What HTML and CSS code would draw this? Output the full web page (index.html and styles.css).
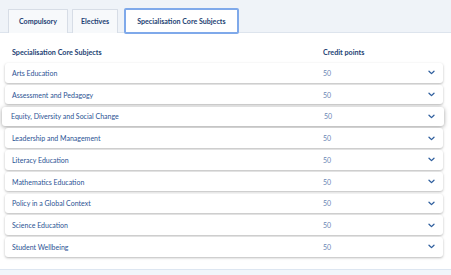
FILE: index.html
```html
<!DOCTYPE html>
<html lang="en">

<head>
    <meta charset="UTF-8">
    <meta name="viewport" content="width=device-width, initial-scale=1.0">
    <title>Course structure</title>
    <link rel="stylesheet" href="styles.css">
</head>

<body>
    <div class="tabs">
        <div class="tab">Compulsory</div>
        <div class="tab narrow">Electives</div>
        <div class="tab active">Specialisation Core Subjects</div>
    </div>

    <div class="content">
        <div class="head">
            <span>Specialisation Core Subjects</span>
            <span>Credit points</span>
        </div>

        <div class="row"><span class="name">Arts Education</span><span class="pts">50</span><span class="chev"></span></div>
        <div class="row"><span class="name">Assessment and Pedagogy</span><span class="pts">50</span><span class="chev"></span></div>
        <div class="row hover"><span class="name">Equity, Diversity and Social Change</span><span class="pts">50</span><span class="chev"></span></div>
        <div class="row"><span class="name">Leadership and Management</span><span class="pts">50</span><span class="chev"></span></div>
        <div class="row"><span class="name">Literacy Education</span><span class="pts">50</span><span class="chev"></span></div>
        <div class="row"><span class="name">Mathematics Education</span><span class="pts">50</span><span class="chev"></span></div>
        <div class="row"><span class="name">Policy in a Global Context</span><span class="pts">50</span><span class="chev"></span></div>
        <div class="row"><span class="name">Science Education</span><span class="pts">50</span><span class="chev"></span></div>
        <div class="row"><span class="name">Student Wellbeing</span><span class="pts">50</span><span class="chev"></span></div>
    </div>

    <div class="footer"></div>

    <script>
        // put the chevron in every row
        document.querySelectorAll(".chev").forEach(function (c) {
            c.innerHTML = '<svg width="7" height="5" viewBox="0 0 7 5"><path d="M1 1.2 L3.5 3.6 L6 1.2" fill="none" stroke="#2f5f9e" stroke-width="1.3" stroke-linecap="round" stroke-linejoin="round"/></svg>';
        });
    </script>
</body>

</html>
```

FILE: styles.css
```css
* {
    margin: 0;
    padding: 0;
    box-sizing: border-box;
}

body {
    font-family: Lato, "Open Sans", sans-serif;
    background-color: white;
    width: 451px;
    height: 275px;
    overflow: hidden;
}

.tabs {
    display: flex;
    align-items: flex-end;
    height: 33px;
    background-color: #eff3f8;
    border-bottom: 1px solid #dde4ed;
    padding-left: 8px;
    gap: 4px;
}

.tab {
    height: 24px;
    padding: 0 10px;
    display: flex;
    align-items: center;
    border: 1px solid #d7dde6;
    border-bottom: none;
    background-color: #f7f9fb;
    color: #1d3f73;
    font-size: 7.1px;
    font-weight: bold;
    margin-bottom: -1px;
    border-radius: 1px 1px 0 0;
}

.tab.narrow {
    padding: 0 8px;
}

.tab.active {
    height: 26px;
    margin-left: 2px;
    padding: 0 11px;
    background-color: white;
    border: 2px solid #7fa9ea;
    border-radius: 2px;
    margin-bottom: -2px;
}

.content {
    padding: 15px 8px 0 5px;
    height: 236px;
}

.head {
    display: grid;
    grid-template-columns: 311px 1fr;
    padding: 0 7px;
    color: #1d3f73;
    font-size: 7.2px;
    font-weight: bold;
    height: 15px;
    line-height: 10px;
}

.row {
    display: grid;
    grid-template-columns: 311px 1fr 10px;
    align-items: center;
    height: 19.5px;
    margin-bottom: 2.25px;
    padding: 0 7px;
    background-color: white;
    border-radius: 3px;
    box-shadow: 0 1px 2.5px rgba(0, 0, 0, 0.28);
    font-size: 7px;
}

.row.hover {
    grid-template-columns: 313px 1fr 10px;
    margin-left: -3px;
    margin-right: -1px;
    padding-left: 9px;
    padding-right: 8px;
    box-shadow: 0 1px 4px rgba(0, 0, 0, 0.38);
}

.name {
    color: #2b5394;
}

.pts {
    color: #6985b3;
}

.chev {
    display: flex;
    justify-content: center;
}

.footer {
    height: 8px;
    background-color: #f1f5fa;
    border-top: 1px solid #dde6f1;
}
```
